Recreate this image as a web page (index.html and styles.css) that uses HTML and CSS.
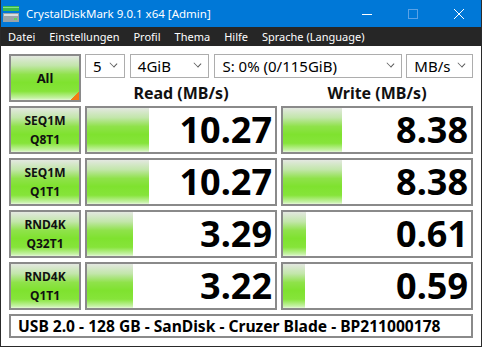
FILE: index.html
```html
<!DOCTYPE html>
<html lang="de">
<head>
  <meta charset="UTF-8">
  <title>CrystalDiskMark 9.0.1 x64 [Admin]</title>
  <link rel="stylesheet" href="styles.css">
</head>
<body>
  <div class="window">
    <!-- Titelleiste -->
    <div class="titlebar">
      <svg class="app-icon" width="16" height="16" viewBox="0 0 16 16">
        <rect x="0" y="0" width="16" height="5" fill="#3cb84a"/>
        <rect x="0" y="1" width="16" height="1" fill="#7fe08a"/>
        <rect x="0" y="7" width="16" height="9" fill="#9aa3a8"/>
        <rect x="1" y="8" width="14" height="2" fill="#d8dde0"/>
        <rect x="11" y="12" width="3" height="2" fill="#5fd35f"/>
      </svg>
      <span class="title">CrystalDiskMark 9.0.1 x64 [Admin]</span>
      <div class="controls">
        <span class="ctl">
          <svg width="10" height="10" viewBox="0 0 10 10"><line x1="0" y1="5.5" x2="10" y2="5.5" stroke="#fff" stroke-width="1"/></svg>
        </span>
        <span class="ctl">
          <svg width="10" height="10" viewBox="0 0 10 10"><rect x="0.5" y="0.5" width="9" height="9" fill="none" stroke="#5aa2e6" stroke-width="1"/></svg>
        </span>
        <span class="ctl">
          <svg width="10" height="10" viewBox="0 0 10 10"><path d="M0 0 L10 10 M10 0 L0 10" stroke="#fff" stroke-width="1"/></svg>
        </span>
      </div>
    </div>

    <!-- Menü -->
    <div class="menubar">
      <span>Datei</span>
      <span>Einstellungen</span>
      <span>Profil</span>
      <span>Thema</span>
      <span>Hilfe</span>
      <span>Sprache (Language)</span>
    </div>

    <div class="content">
      <div class="grid">
        <div class="btn btn-all">All</div>
        <div class="top">
          <div class="combos">
            <div class="combo c-count">5<span class="chev"></span></div>
            <div class="combo c-size">4GiB<span class="chev"></span></div>
            <div class="combo c-drive">S: 0% (0/115GiB)<span class="chev"></span></div>
            <div class="combo c-unit">MB/s<span class="chev"></span></div>
          </div>
          <div class="heads">
            <div class="head">Read (MB/s)</div>
            <div class="head">Write (MB/s)</div>
          </div>
        </div>

        <div class="btn">SEQ1M<br>Q8T1</div>
        <div class="cell"><div class="bar" style="width: 62px"></div><div class="num">10.27</div></div>
        <div class="cell"><div class="bar" style="width: 59px"></div><div class="num">8.38</div></div>

        <div class="btn">SEQ1M<br>Q1T1</div>
        <div class="cell"><div class="bar" style="width: 62px"></div><div class="num">10.27</div></div>
        <div class="cell"><div class="bar" style="width: 59px"></div><div class="num">8.38</div></div>

        <div class="btn">RND4K<br>Q32T1</div>
        <div class="cell"><div class="bar" style="width: 46px"></div><div class="num">3.29</div></div>
        <div class="cell"><div class="bar" style="width: 23px"></div><div class="num">0.61</div></div>

        <div class="btn">RND4K<br>Q1T1</div>
        <div class="cell"><div class="bar" style="width: 46px"></div><div class="num">3.22</div></div>
        <div class="cell"><div class="bar" style="width: 22px"></div><div class="num">0.59</div></div>

        <div class="footer">USB 2.0 - 128 GB - SanDisk - Cruzer Blade - BP211000178</div>
      </div>
    </div>
  </div>
</body>
</html>
```

FILE: styles.css
```css
body {
  margin: 0;
  font-family: "Noto Sans", "Open Sans", sans-serif;
  background: #ffffff;
}

.window {
  width: 482px;
  height: 347px;
  box-sizing: border-box;
  border: 1px solid #2a2a2a;
  border-top: none;
  background: #ffffff;
  overflow: hidden;
}

.titlebar {
  height: 27px;
  background: #0078d7;
  display: flex;
  align-items: center;
  color: #ffffff;
  margin: 0 -1px;
}

.app-icon {
  margin-left: 3px;
  margin-right: 7px;
}

.title {
  font-size: 11.5px;
  flex: 1;
}

.controls {
  display: flex;
  height: 100%;
}

.ctl {
  width: 46px;
  display: flex;
  align-items: center;
  justify-content: center;
}

.menubar {
  height: 19px;
  background: #262626;
  color: #ffffff;
  font-size: 11px;
  display: flex;
  align-items: center;
  gap: 14px;
  padding-left: 7px;
}

.content {
  padding: 8px 8px 0 8px;
}

.grid {
  display: grid;
  grid-template-columns: 72px 192px 192px;
  grid-template-rows: 48px 48px 48px 48px 48px 24px;
  gap: 4px;
}

.btn {
  box-sizing: border-box;
  border: 2px solid #8a8a8a;
  background: linear-gradient(to bottom, #e3e8e0 0%, #c2e6aa 22%, #8fe24a 42%, #7fe22f 60%, #86e43a 80%, #c7f2a8 96%, #e6f8d8 100%);
  font-size: 12px;
  font-weight: bold;
  line-height: 19px;
  text-align: center;
  display: flex;
  align-items: center;
  justify-content: center;
  color: #111;
}

.btn-all {
  font-size: 13px;
  background:
    linear-gradient(135deg, transparent 0 50%, #f47a14 50%) right bottom / 8px 8px no-repeat,
    linear-gradient(to bottom, #e3e8e0 0%, #c2e6aa 22%, #8fe24a 42%, #7fe22f 60%, #86e43a 80%, #c7f2a8 96%, #e6f8d8 100%);
}

.top {
  grid-column: 2 / 4;
  display: flex;
  flex-direction: column;
}

.combos {
  display: flex;
  gap: 5px;
}

.combo {
  box-sizing: border-box;
  height: 24px;
  border: 1px solid #adadad;
  font-size: 15px;
  line-height: 22px;
  padding-left: 7px;
  color: #000;
  display: flex;
  justify-content: space-between;
}

.c-count { width: 40px; }
.c-size { width: 80px; }
.c-drive { width: 189px; }
.c-unit { width: 67px; margin-left: -1px; }

.chev {
  width: 6px;
  height: 6px;
  border-right: 1px solid #555;
  border-bottom: 1px solid #555;
  transform: rotate(45deg) scale(0.9, 0.7);
  margin: 5px 7px 0 0;
}

.heads {
  display: grid;
  grid-template-columns: 192px 192px;
  gap: 4px;
  flex: 1;
  padding-top: 5px;
}

.head {
  font-size: 16px;
  font-weight: bold;
  text-align: center;
  line-height: 20px;
  color: #111;
}

.cell {
  box-sizing: border-box;
  border: 2px solid #8a8a8a;
  display: grid;
  background: #ffffff;
}

.bar {
  grid-area: 1 / 1;
  height: 100%;
  background: linear-gradient(to bottom, #e3e8e0 0%, #c2e6aa 22%, #8fe24a 42%, #7fe22f 60%, #86e43a 80%, #c7f2a8 96%, #e6f8d8 100%);
}

.num {
  grid-area: 1 / 1;
  font-size: 36px;
  font-weight: bold;
  text-align: right;
  line-height: 44px;
  padding-right: 3px;
  color: #000;
}

.footer {
  grid-column: 1 / 4;
  box-sizing: border-box;
  border: 2px solid #8a8a8a;
  font-size: 15.6px;
  font-weight: bold;
  line-height: 20px;
  padding-left: 7px;
  color: #000;
}
```
